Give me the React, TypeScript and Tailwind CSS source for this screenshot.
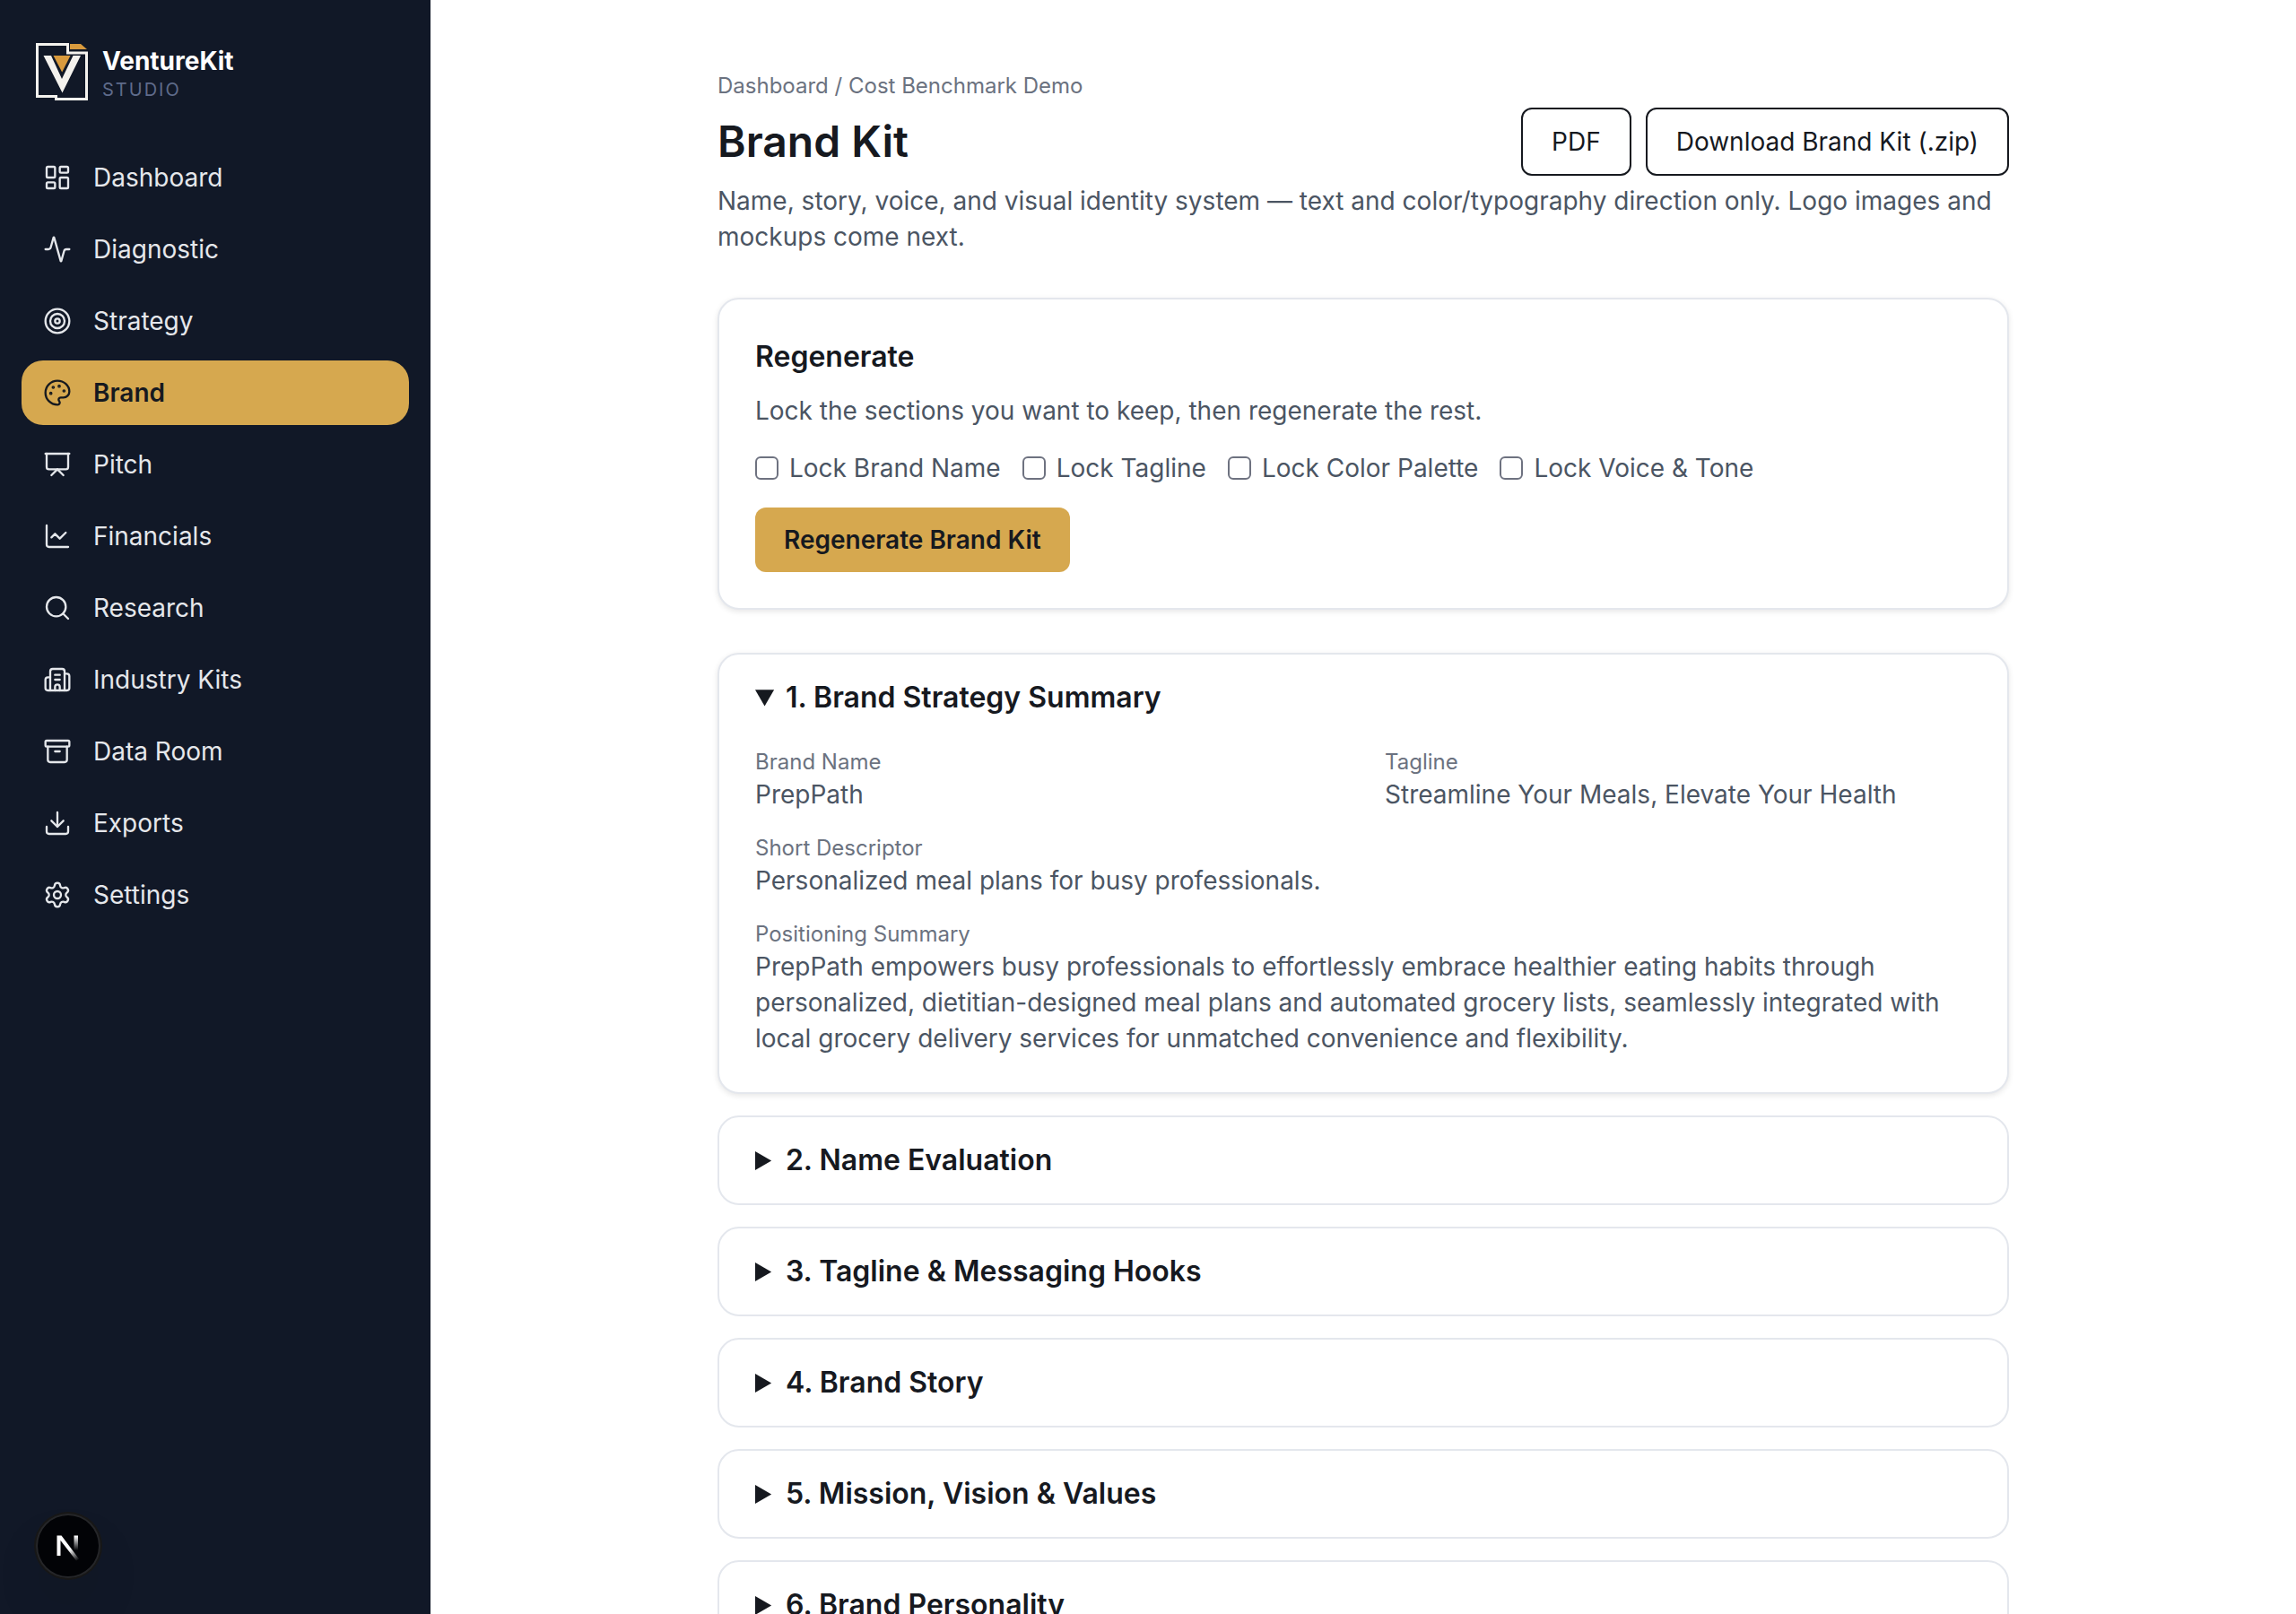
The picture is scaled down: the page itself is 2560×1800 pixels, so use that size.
import {
  Activity,
  Archive,
  Download,
  LayoutDashboard,
  Palette,
  Presentation,
  Search,
  Settings,
  Target,
  type LucideIcon,
} from "lucide-react";
import type { ReactNode } from "react";

type IconProps = { className?: string; strokeWidth?: number };

function ChartIcon({ className, strokeWidth = 2 }: IconProps) {
  return (
    <svg viewBox="0 0 24 24" fill="none" stroke="currentColor" strokeWidth={strokeWidth} strokeLinecap="round" strokeLinejoin="round" className={className} aria-hidden="true">
      <path d="M3 3v16a2 2 0 0 0 2 2h16" />
      <path d="m19 9-5 5-4-4-3 3" />
    </svg>
  );
}

function BuildingIcon({ className, strokeWidth = 2 }: IconProps) {
  return (
    <svg viewBox="0 0 24 24" fill="none" stroke="currentColor" strokeWidth={strokeWidth} strokeLinecap="round" strokeLinejoin="round" className={className} aria-hidden="true">
      <path d="M10 12h4" />
      <path d="M10 8h4" />
      <path d="M14 21v-3a2 2 0 0 0-4 0v3" />
      <path d="M6 10H4a2 2 0 0 0-2 2v7a2 2 0 0 0 2 2h16a2 2 0 0 0 2-2V9a2 2 0 0 0-2-2h-2" />
      <path d="M6 21V5a2 2 0 0 1 2-2h8a2 2 0 0 1 2 2v16" />
    </svg>
  );
}

const navItems: { label: string; icon: LucideIcon | typeof ChartIcon; active?: boolean }[] = [
  { label: "Dashboard", icon: LayoutDashboard },
  { label: "Diagnostic", icon: Activity },
  { label: "Strategy", icon: Target },
  { label: "Brand", icon: Palette, active: true },
  { label: "Pitch", icon: Presentation },
  { label: "Financials", icon: ChartIcon },
  { label: "Research", icon: Search },
  { label: "Industry Kits", icon: BuildingIcon },
  { label: "Data Room", icon: Archive },
  { label: "Exports", icon: Download },
  { label: "Settings", icon: Settings },
];

const locks = ["Lock Brand Name", "Lock Tagline", "Lock Color Palette", "Lock Voice & Tone"];

const closedSections = [
  "2. Name Evaluation",
  "3. Tagline & Messaging Hooks",
  "4. Brand Story",
  "5. Mission, Vision & Values",
  "6. Brand Personality",
];

function Logo() {
  return (
    <svg viewBox="0 0 58 64" className="h-16 w-[58px] shrink-0" aria-hidden="true">
      <path d="M1.5 1.5H35.5V11H56.5V62.5H22.5V59.5H1.5Z" fill="none" stroke="#f4f2ee" strokeWidth="3" />
      <path d="M38 1H50L57 7H38Z" fill="#d99a3d" />
      <path d="M8.5 14H17L29 40L41.5 14H50L29.5 55.5Z" fill="#f4f2ee" />
      <path d="M19.5 14H38.5L29.2 32.5Z" fill="#d99a3d" />
    </svg>
  );
}

function DevBadge() {
  return (
    <button
      type="button"
      aria-label="Open developer tools"
      className="fixed bottom-10 left-10 flex size-18 items-center justify-center rounded-full bg-[#020306] shadow-[0_0_0_2px_#171717,inset_0_0_0_2px_rgba(255,255,255,0.14),0_32px_64px_-16px_rgba(0,0,0,0.24)]"
    >
      <svg viewBox="0 0 36 36" className="size-9" aria-hidden="true">
        <defs>
          <linearGradient id="diagonal" x1="20" y1="22" x2="28" y2="33" gradientUnits="userSpaceOnUse">
            <stop stopColor="#fff" />
            <stop offset="1" stopColor="#fff" stopOpacity="0.1" />
          </linearGradient>
          <linearGradient id="stem" x1="0" y1="7" x2="0" y2="23" gradientUnits="userSpaceOnUse">
            <stop stopColor="#fff" />
            <stop offset="1" stopColor="#fff" stopOpacity="0" />
          </linearGradient>
        </defs>
        <path d="M5.5 6.5H10.5L30 32.5L27 34.5L9.5 12V29H5.5Z" fill="url(#diagonal)" />
        <path d="M24.5 6.5H29V23H24.5Z" fill="url(#stem)" />
      </svg>
    </button>
  );
}

function Field({ label, children, wide = false }: { label: string; children: ReactNode; wide?: boolean }) {
  return (
    <div className={wide ? "col-span-2" : ""}>
      <dt className="text-2xl leading-8 text-[#6b7280]">{label}</dt>
      <dd>{children}</dd>
    </div>
  );
}

export default function App() {
  return (
    <div className="flex h-screen overflow-hidden bg-white font-['Inter',sans-serif] text-[28px] leading-10 text-[#4b5563]">
      <aside className="w-[480px] shrink-0 bg-[#111827] px-6 pt-12">
        <div className="flex items-center gap-4 px-4">
          <Logo />
          <div>
            <p className="text-[28px] leading-10 font-bold text-white">VentureKit</p>
            <p className="text-xl leading-6 tracking-widest text-[#5f6b8a]">STUDIO</p>
          </div>
        </div>
        <nav className="mt-[50px]">
          <ul className="flex flex-col gap-2">
            {navItems.map(({ label, icon: Icon, active }) => (
              <li key={label}>
                <a
                  href="#"
                  aria-current={active ? "page" : undefined}
                  className={
                    active
                      ? "flex items-center gap-6 rounded-3xl bg-[#d6a84f] px-6 py-4 font-semibold text-[#16191f]"
                      : "flex items-center gap-6 rounded-3xl px-6 py-4 text-[#e5e7eb]"
                  }
                >
                  <Icon className="size-8" strokeWidth={1.75} />
                  {label}
                </a>
              </li>
            ))}
          </ul>
        </nav>
      </aside>

      <main className="min-w-0 flex-1 overflow-y-auto px-20 py-20 [scrollbar-width:none]">
        <div className="mx-auto max-w-[1440px]">
          <nav aria-label="Breadcrumb" className="text-2xl leading-8 text-[#6b7280]">
            <a href="#">Dashboard</a> / <a href="#">Cost Benchmark Demo</a>
          </nav>
          <div className="mt-2 flex items-center justify-between">
            <h1 className="text-5xl font-semibold text-[#16191f]">Brand Kit</h1>
            <div className="flex gap-4">
              <button type="button" className="rounded-xl border-2 border-[#16191f] px-8 py-4 text-[#16191f]">
                PDF
              </button>
              <button type="button" className="rounded-xl border-2 border-[#16191f] px-8 py-4 text-[#16191f]">
                Download Brand Kit (.zip)
              </button>
            </div>
          </div>
          <p className="mt-2">
            Name, story, voice, and visual identity system — text and color/typography direction only. Logo images and
            mockups come next.
          </p>

          <section className="mt-12 rounded-3xl border-2 border-[#e4e7ed] bg-white p-10 shadow-[0_2px_6px_rgba(0,0,0,0.1)]">
            <h2 className="text-[32px] leading-12 font-semibold text-[#16191f]">Regenerate</h2>
            <p className="mt-4">Lock the sections you want to keep, then regenerate the rest.</p>
            <div className="mt-6 flex flex-wrap gap-6">
              {locks.map((lock) => (
                <label key={lock} className="flex items-center gap-3">
                  <input
                    type="checkbox"
                    className="size-[26px] appearance-none rounded-md border-2 border-[#6e7280] bg-white checked:bg-[#d6a84f]"
                  />
                  {lock}
                </label>
              ))}
            </div>
            <button type="button" className="mt-6 rounded-xl bg-[#d6a84f] px-8 py-4 font-semibold text-[#16191f]">
              Regenerate Brand Kit
            </button>
          </section>

          <div className="mt-12 flex flex-col gap-6">
            <details open className="rounded-3xl border-2 border-[#e4e7ed] bg-white px-10 shadow-[0_2px_6px_rgba(0,0,0,0.1)]">
              <summary className="cursor-pointer py-6 text-[32px] leading-12 font-semibold text-[#16191f]">
                1. Brand Strategy Summary
              </summary>
              <dl className="grid grid-cols-2 gap-x-12 gap-y-6 pt-2 pb-10">
                <Field label="Brand Name">PrepPath</Field>
                <Field label="Tagline">Streamline Your Meals, Elevate Your Health</Field>
                <Field label="Short Descriptor" wide>
                  Personalized meal plans for busy professionals.
                </Field>
                <Field label="Positioning Summary" wide>
                  PrepPath empowers busy professionals to effortlessly embrace healthier eating habits through
                  personalized, dietitian-designed meal plans and automated grocery lists, seamlessly integrated with
                  local grocery delivery services for unmatched convenience and flexibility.
                </Field>
              </dl>
            </details>
            {closedSections.map((title) => (
              <details key={title} className="rounded-3xl border-2 border-[#e4e7ed] bg-white px-10">
                <summary className="cursor-pointer py-6 text-[32px] leading-12 font-semibold text-[#16191f]">
                  {title}
                </summary>
              </details>
            ))}
          </div>
        </div>
      </main>

      <DevBadge />
    </div>
  );
}
